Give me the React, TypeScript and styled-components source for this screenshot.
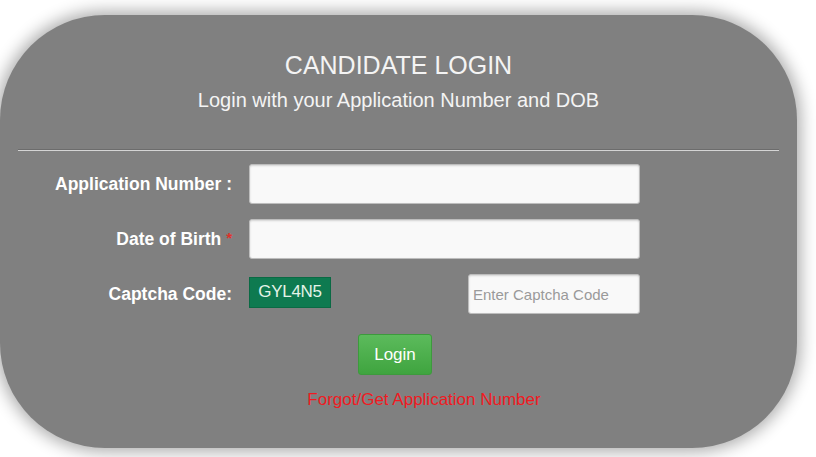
import React from "react";
import styled, { createGlobalStyle } from "styled-components";

const GlobalStyle = createGlobalStyle`
  html, body {
    margin: 0;
    padding: 0;
    background: #ffffff;
    font-family: "Liberation Sans", Arial, sans-serif;
  }
  * {
    box-sizing: border-box;
  }
`;

function App() {
  return (
    <>
      <GlobalStyle />
      <Page>
        <Panel>
          <Title>CANDIDATE LOGIN</Title>
          <Subtitle>Login with your Application Number and DOB</Subtitle>
          <Divider />
          <Form>
            <Row>
              <Label>Application Number :</Label>
              <TextInput type="text" />
            </Row>
            <Row>
              <Label>
                Date of Birth <Required>*</Required>
              </Label>
              <TextInput type="text" />
            </Row>
            <Row>
              <Label>Captcha Code:</Label>
              <CaptchaField>
                <CaptchaImage>GYL4N5</CaptchaImage>
                <CaptchaInput type="text" placeholder="Enter Captcha Code" />
              </CaptchaField>
            </Row>
            <ButtonRow>
              <LoginButton type="button">Login</LoginButton>
            </ButtonRow>
            <LinkRow>
              <ForgotLink href="#">Forgot/Get Application Number</ForgotLink>
            </LinkRow>
          </Form>
        </Panel>
      </Page>
    </>
  );
}

const Page = styled.div`
  width: 816px;
  height: 457px;
  overflow: hidden;
  padding-top: 15px;
  background: #ffffff;
`;

const Panel = styled.div`
  width: 797px;
  height: 433px;
  padding: 35px 18px 0;
  background: #808080;
  border-radius: 105px;
  box-shadow: 0 0 16px 4px rgba(0, 0, 0, 0.32);
  color: #ffffff;
`;

const Title = styled.h1`
  margin: 0;
  font-size: 25px;
  line-height: 30px;
  font-weight: normal;
  text-align: center;
  color: #f4f4f4;
`;

const Subtitle = styled.p`
  margin: 8px 0 0;
  font-size: 20px;
  line-height: 24px;
  text-align: center;
  color: #f4f4f4;
`;

const Divider = styled.hr`
  margin: 37px 0 0;
  height: 0;
  border: 0;
  border-top: 1px solid #6c6c6c;
  border-bottom: 1px solid #d4d4d4;
`;

const Form = styled.div`
  display: flex;
  flex-direction: column;
  padding-top: 13px;
`;

const Row = styled.div`
  display: flex;
  align-items: center;
  gap: 17px;
  margin-bottom: 15px;
`;

const Label = styled.label`
  width: 214px;
  text-align: right;
  font-size: 17.5px;
  font-weight: bold;
  color: #ffffff;
`;

const Required = styled.span`
  color: #e0302a;
  font-size: 15px;
  vertical-align: 2px;
`;

const TextInput = styled.input`
  width: 391px;
  height: 40px;
  padding: 0 6px;
  background: #f9f9f9;
  border: 1px solid #bdbdbd;
  border-radius: 3px;
  box-shadow: inset 0 1px 2px rgba(0, 0, 0, 0.15);
  font-family: inherit;
  font-size: 15px;
  outline: none;
`;

const CaptchaField = styled.div`
  width: 391px;
  display: flex;
  align-items: center;
  justify-content: space-between;
`;

const CaptchaImage = styled.div`
  width: 82px;
  height: 31px;
  margin-top: -4px;
  display: flex;
  align-items: center;
  justify-content: center;
  background: #0e7a50;
  border: 1px solid #0a6a44;
  color: #e4f3e8;
  font-size: 17px;
  letter-spacing: -0.3px;
`;

const CaptchaInput = styled(TextInput)`
  width: 172px;
  padding: 0 4px;
  font-size: 15px;

  &::placeholder {
    color: #9a9a9a;
  }
`;

const ButtonRow = styled.div`
  display: flex;
  justify-content: center;
  padding-right: 7px;
  margin-top: 5px;
`;

const LoginButton = styled.button`
  width: 74px;
  height: 41px;
  border: 1px solid #3d9a3d;
  border-radius: 3px;
  background: linear-gradient(#5cbb5c, #3fa43f);
  color: #ffffff;
  font-family: inherit;
  font-size: 17px;
  cursor: pointer;
`;

const LinkRow = styled.div`
  display: flex;
  justify-content: center;
  padding-left: 51px;
  margin-top: 15px;
  line-height: 20px;
`;

const ForgotLink = styled.a`
  color: #f01a22;
  font-size: 17px;
  text-decoration: none;
`;

export default App;
